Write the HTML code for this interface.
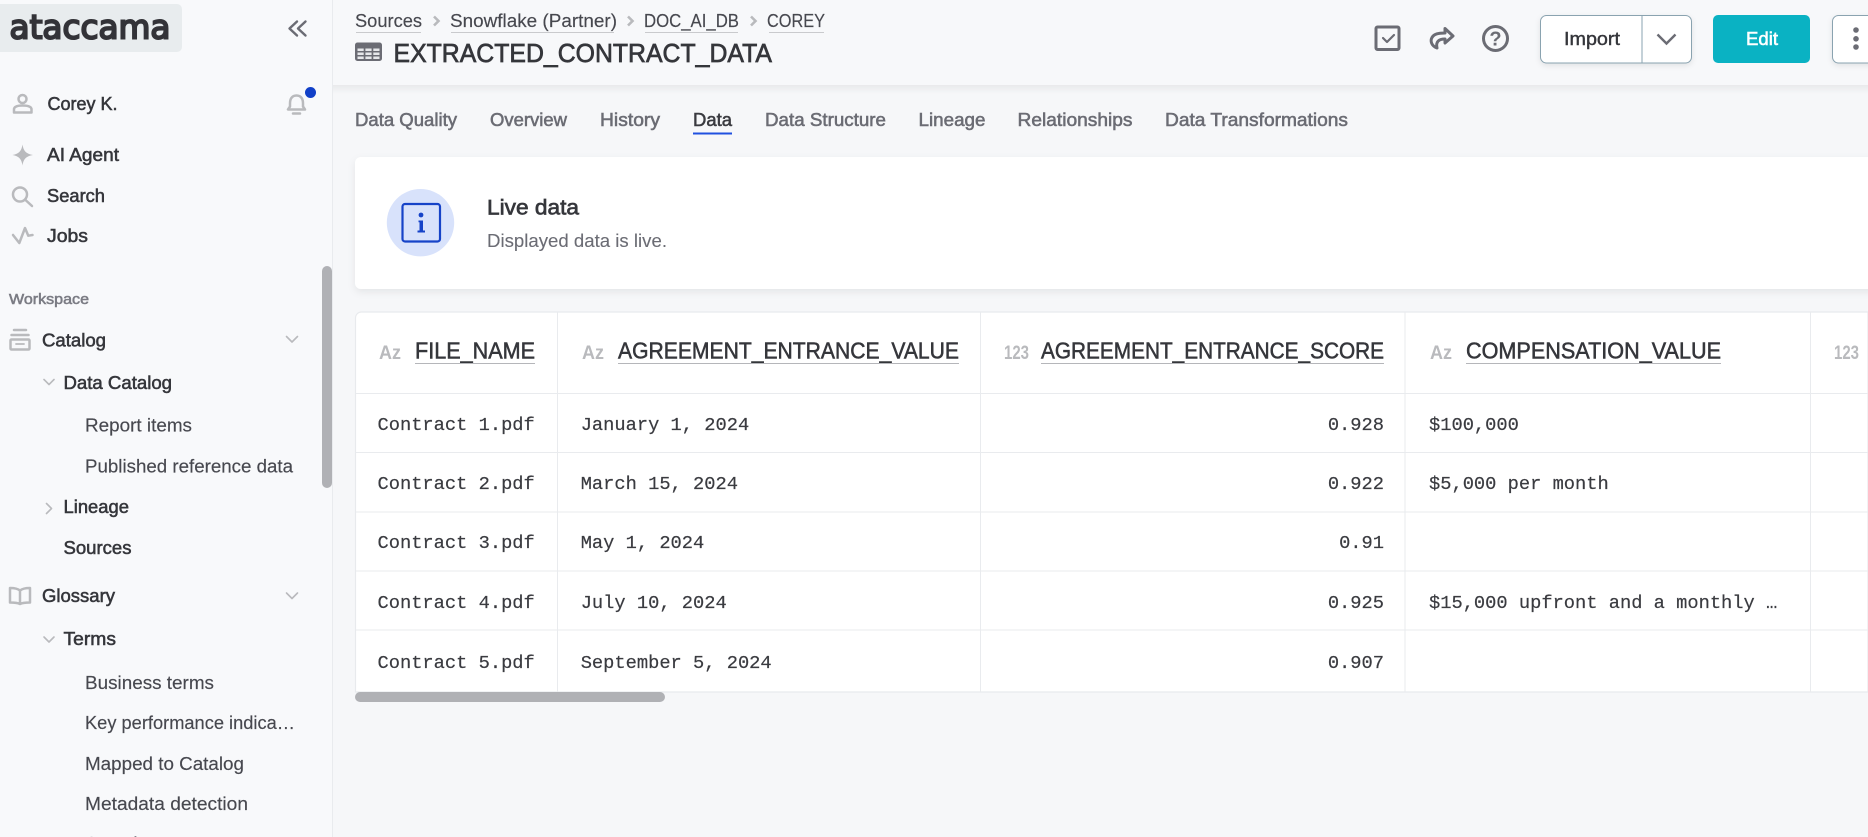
<!DOCTYPE html>
<html><head><meta charset="utf-8"><title>Extracted contract data</title>
<style>
html,body{margin:0;padding:0;background:#f6f7f9;overflow:hidden}
svg{display:block}
text{font-family:"Liberation Sans",Arial,sans-serif}
.m{stroke-width:.55px}
.n{fill:#35363b;stroke:#35363b;font-size:18.5px}
.r{fill:#47484f;stroke:#47484f;stroke-width:.15px;font-size:18.5px}
.tab{fill:#6b6c74;stroke:#6b6c74;font-size:18px}
.bc{fill:#47484f;stroke:#47484f;stroke-width:.15px;font-size:18px}
.h{fill:#35363b;stroke:#35363b;font-size:23px;stroke-width:.55px}
.az{fill:#b9babd;font-size:19px;font-weight:bold}
.c{font-family:"Liberation Mono",monospace;font-size:18.73px;fill:#3a3b40;stroke:#3a3b40;stroke-width:.2px}
.ic{fill:none;stroke:#b9babd;stroke-width:2.5;stroke-linecap:round;stroke-linejoin:round}
.ch{fill:none;stroke:#b9babd;stroke-width:1.6;stroke-linecap:round;stroke-linejoin:round}
.dk{fill:none;stroke:#6b6c74;stroke-width:3;stroke-linecap:round;stroke-linejoin:round}
.ln{stroke:#e9ebee;stroke-width:1}
.ul{stroke:#b5b6ba;stroke-width:1}
</style></head>
<body>
<svg width="1868" height="837" viewBox="0 0 1868 837" xmlns="http://www.w3.org/2000/svg">
<defs>
<linearGradient id="hs" x1="0" y1="0" x2="0" y2="1"><stop offset="0" stop-color="#000" stop-opacity=".055"/><stop offset="1" stop-color="#000" stop-opacity="0"/></linearGradient>
<filter id="sh" x="-5%" y="-20%" width="110%" height="150%"><feDropShadow dx="0" dy="3" stdDeviation="4" flood-color="#000" flood-opacity=".07"/></filter>
<filter id="sb" x="-20%" y="-30%" width="140%" height="170%"><feDropShadow dx="0" dy="2" stdDeviation="3" flood-color="#000" flood-opacity=".09"/></filter>
</defs>

<!-- backgrounds -->
<rect width="1868" height="837" fill="#f6f7f9"/>
<rect width="332" height="837" fill="#f8f9fb"/>
<rect x="332" width="1" height="837" fill="#e9ebee"/>
<rect x="333" y="85" width="1535" height="9" fill="url(#hs)"/>
<rect x="333" width="1535" height="85" fill="#f7f8fa"/>

<!-- logo -->
<rect x="-6" y="4" width="188" height="48" rx="5" fill="#e8ecee"/>
<text x="9.5" y="38.5" font-size="33" fill="#333338" stroke="#333338" stroke-width="2" style="font-family:'DejaVu Sans',sans-serif" textLength="161" lengthAdjust="spacingAndGlyphs">ataccama</text>
<path d="M297 21.5 L289.5 28.5 L297 35.5 M305.5 21.5 L298 28.5 L305.5 35.5" fill="none" stroke="#6b6c74" stroke-width="2.4" stroke-linecap="round" stroke-linejoin="round"/>

<!-- sidebar top -->
<circle cx="22.5" cy="99" r="4" class="ic"/>
<path d="M14 112.5 V109.5 C14 106.5 18 105.5 22.5 105.5 C27 105.5 31.5 106.5 31.5 109.5 V112.5 Z" class="ic"/>
<text x="47.5" y="110" class="n m" textLength="70" lengthAdjust="spacingAndGlyphs">Corey K.</text>
<path d="M296.5 95.5 C291.5 95.5 290 99.5 290 103.5 V106.5 L288 109.5 H305 L303 106.5 V103.5 C303 99.5 301.5 95.5 296.5 95.5 Z M293 113.5 H300" class="ic"/>
<circle cx="310.5" cy="92.5" r="5.5" fill="#1140c8"/>

<path d="M22.5 144.5 C23.5 151 26 153.7 33 155 C26 156.3 23.5 159 22.5 165.5 C21.5 159 19 156.3 12.5 155 C19 153.7 21.5 151 22.5 144.5 Z" fill="#b9babd"/>
<text x="47" y="161" class="n m" textLength="72" lengthAdjust="spacingAndGlyphs">AI Agent</text>
<circle cx="20" cy="194.5" r="7" class="ic"/>
<path d="M25.5 200 L32 206" class="ic"/>
<text x="47" y="202" class="n m" textLength="58" lengthAdjust="spacingAndGlyphs">Search</text>
<path d="M13 235 L19.3 243 L25 228 L28.3 235.7 L32.5 235" class="ic"/>
<text x="47" y="242" class="n m" textLength="41" lengthAdjust="spacingAndGlyphs">Jobs</text>

<text x="9" y="304" font-size="14.5" fill="#7b7c84" stroke="#7b7c84" class="m" textLength="80" lengthAdjust="spacingAndGlyphs">Workspace</text>

<!-- nav -->
<path d="M14 330 H26 M11.5 335 H28.5" class="ic"/>
<rect x="10.5" y="339.5" width="19" height="10" rx="1" class="ic"/>
<path d="M16 344 H24" class="ic" style="stroke-width:1.8"/>
<text x="42" y="346.5" class="n m" textLength="64" lengthAdjust="spacingAndGlyphs">Catalog</text>
<path d="M286.5 336.5 L292 342 L297.5 336.5" class="ch"/>
<path d="M44 379.5 L49 384.5 L54 379.5" class="ch"/>
<text x="63.5" y="389" class="n m" textLength="108.5" lengthAdjust="spacingAndGlyphs">Data Catalog</text>
<text x="85" y="431.5" class="r" textLength="107" lengthAdjust="spacingAndGlyphs">Report items</text>
<text x="85" y="472.5" class="r" textLength="208" lengthAdjust="spacingAndGlyphs">Published reference data</text>
<path d="M46.5 503.5 L51.5 508.5 L46.5 513.5" class="ch"/>
<text x="63.5" y="513" class="n m" textLength="65.5" lengthAdjust="spacingAndGlyphs">Lineage</text>
<text x="63.5" y="554" class="n m" textLength="68" lengthAdjust="spacingAndGlyphs">Sources</text>

<path d="M20 590.5 C17 588 13 588 10 588 V602.5 C13 602.5 17 602.5 20 604 C23 602.5 27 602.5 30 602.5 V588 C27 588 23 588 20 590.5 Z M20 590.5 V604" class="ic"/>
<text x="42" y="602" class="n m" textLength="73" lengthAdjust="spacingAndGlyphs">Glossary</text>
<path d="M286.5 593 L292 598.5 L297.5 593" class="ch"/>
<path d="M44 637 L49 642 L54 637" class="ch"/>
<text x="63.5" y="645" class="n m" textLength="52.5" lengthAdjust="spacingAndGlyphs">Terms</text>
<text x="85" y="689" class="r" textLength="129" lengthAdjust="spacingAndGlyphs">Business terms</text>
<text x="85" y="729" class="r" textLength="210" lengthAdjust="spacingAndGlyphs">Key performance indica…</text>
<text x="85" y="770" class="r" textLength="159" lengthAdjust="spacingAndGlyphs">Mapped to Catalog</text>
<text x="85" y="810" class="r" textLength="163" lengthAdjust="spacingAndGlyphs">Metadata detection</text>
<text x="85" y="850" class="r" textLength="72" lengthAdjust="spacingAndGlyphs">Samples</text>

<rect x="322" y="266" width="10" height="222" rx="5" fill="#b0b1b5"/>

<!-- breadcrumb -->
<text x="355" y="27" class="bc" textLength="67" lengthAdjust="spacingAndGlyphs">Sources</text>
<text x="450" y="27" class="bc" textLength="167" lengthAdjust="spacingAndGlyphs">Snowflake (Partner)</text>
<text x="644" y="27" class="bc" textLength="95" lengthAdjust="spacingAndGlyphs">DOC_AI_DB</text>
<text x="767" y="27" class="bc" textLength="58" lengthAdjust="spacingAndGlyphs">COREY</text>
<path d="M356 32.5 H421 M451 32.5 H614 M645 32.5 H738 M769 32.5 H824" stroke="#c9cacd" stroke-width="1"/>
<path d="M434 16.5 L438.5 21 L434 25.5 M628 16.5 L632.5 21 L628 25.5 M751 16.5 L755.5 21 L751 25.5" fill="none" stroke="#b9babd" stroke-width="2.6"/>

<!-- title -->
<rect x="355" y="42.5" width="27" height="18.5" rx="2.5" fill="#6b6c74"/>
<g fill="#e6e7ea">
<rect x="357.5" y="48.5" width="6.2" height="2.5"/><rect x="365.4" y="48.5" width="6.2" height="2.5"/><rect x="373.3" y="48.5" width="6.2" height="2.5"/>
<rect x="357.5" y="52.5" width="6.2" height="2.5"/><rect x="365.4" y="52.5" width="6.2" height="2.5"/><rect x="373.3" y="52.5" width="6.2" height="2.5"/>
<rect x="357.5" y="56.5" width="6.2" height="2.5"/><rect x="365.4" y="56.5" width="6.2" height="2.5"/><rect x="373.3" y="56.5" width="6.2" height="2.5"/>
</g>
<text x="393.5" y="62" font-size="25.5" fill="#35363b" stroke="#35363b" stroke-width=".7" textLength="378.5" lengthAdjust="spacingAndGlyphs">EXTRACTED_CONTRACT_DATA</text>

<!-- header actions -->
<rect x="1376" y="27" width="23" height="22.5" rx="1.5" class="dk"/>
<path d="M1383 38 L1387 42 L1394 35" class="dk" style="stroke-width:2.2"/>
<path d="M1445 28.5 L1453 36 L1445 43 V39 C1439 39 1435.5 41.5 1437 48 C1431.5 46 1430 41 1432 37.5 C1434 34 1438 33 1445 33 Z" class="dk"/>
<circle cx="1495.5" cy="38.5" r="12" class="dk"/>
<text x="1495.5" y="45.5" font-size="20" font-weight="bold" fill="#6b6c74" text-anchor="middle">?</text>

<rect x="1540.5" y="15.5" width="151" height="47.5" rx="6" fill="#fff" stroke="#8aa3b0" filter="url(#sb)"/>
<path d="M1642 16 V63" stroke="#8aa3b0"/>
<text x="1564" y="45" font-size="18.5" fill="#35363b" stroke="#35363b" stroke-width=".4" textLength="56" lengthAdjust="spacingAndGlyphs">Import</text>
<path d="M1657.5 34.5 L1666.5 43.5 L1675.5 34.5" fill="none" stroke="#6b6c74" stroke-width="2.4"/>
<rect x="1713" y="15" width="97" height="48" rx="5" fill="#0ab2c3"/>
<text x="1746" y="45" font-size="18.5" fill="#fff" stroke="#fff" class="m" textLength="32" lengthAdjust="spacingAndGlyphs">Edit</text>
<rect x="1832.5" y="15.5" width="60" height="47.5" rx="6" fill="#fff" stroke="#8aa3b0" filter="url(#sb)"/>
<circle cx="1856" cy="30" r="2.8" fill="#6b6c74"/><circle cx="1856" cy="38.8" r="2.8" fill="#6b6c74"/><circle cx="1856" cy="47" r="2.8" fill="#6b6c74"/>

<!-- tabs -->
<text x="355" y="126" class="tab m" textLength="102" lengthAdjust="spacingAndGlyphs">Data Quality</text>
<text x="490" y="126" class="tab m" textLength="77" lengthAdjust="spacingAndGlyphs">Overview</text>
<text x="600" y="126" class="tab m" textLength="60" lengthAdjust="spacingAndGlyphs">History</text>
<text x="693" y="126" class="tab m" style="fill:#3a3b40;stroke:#3a3b40" textLength="39" lengthAdjust="spacingAndGlyphs">Data</text>
<text x="765" y="126" class="tab m" textLength="121" lengthAdjust="spacingAndGlyphs">Data Structure</text>
<text x="918.5" y="126" class="tab m" textLength="67" lengthAdjust="spacingAndGlyphs">Lineage</text>
<text x="1017.5" y="126" class="tab m" textLength="115" lengthAdjust="spacingAndGlyphs">Relationships</text>
<text x="1165" y="126" class="tab m" textLength="183" lengthAdjust="spacingAndGlyphs">Data Transformations</text>
<rect x="693" y="132.5" width="39" height="2" fill="#2050e0"/>

<!-- info card -->
<rect x="355" y="157" width="1540" height="132" rx="6" fill="#fff" filter="url(#sh)"/>
<circle cx="420.5" cy="222.7" r="33.7" fill="#d8e2fb"/>
<rect x="402.5" y="204" width="37.5" height="37.5" rx="2.5" fill="none" stroke="#1643c8" stroke-width="2.2"/>
<circle cx="421" cy="215" r="2.4" fill="#1643c8"/>
<path d="M418.5 220.5 H423 V230.5 H425 V232.5 H417.5 V230.5 H419.5 V222.3 H418.5 Z" fill="#1643c8"/>
<text x="487" y="214.5" font-size="21" fill="#35363b" stroke="#35363b" stroke-width=".65" textLength="92" lengthAdjust="spacingAndGlyphs">Live data</text>
<text x="487" y="247" font-size="18" fill="#6b6c74" stroke="#6b6c74" stroke-width=".1" textLength="180" lengthAdjust="spacingAndGlyphs">Displayed data is live.</text>

<!-- table -->
<path d="M355.5 692 V318 a6 6 0 0 1 6 -6 H1868 V692 Z" fill="#fff" stroke="#e8eaed" stroke-width="1.2"/>
<path class="ln" d="M356 393.5 H1868 M356 452.5 H1868 M356 512 H1868 M356 571 H1868 M356 630 H1868 M557.5 312 V692 M980.5 312 V692 M1405 312 V692 M1810.5 312 V692"/>

<text x="379" y="359" class="az" textLength="22" lengthAdjust="spacingAndGlyphs">Az</text>
<text x="415" y="358.5" class="h" textLength="120" lengthAdjust="spacingAndGlyphs">FILE_NAME</text>
<text x="582" y="359" class="az" textLength="22" lengthAdjust="spacingAndGlyphs">Az</text>
<text x="618" y="358.5" class="h" textLength="341" lengthAdjust="spacingAndGlyphs">AGREEMENT_ENTRANCE_VALUE</text>
<text x="1004" y="359" class="az" textLength="25" lengthAdjust="spacingAndGlyphs">123</text>
<text x="1041" y="358.5" class="h" textLength="343" lengthAdjust="spacingAndGlyphs">AGREEMENT_ENTRANCE_SCORE</text>
<text x="1430" y="359" class="az" textLength="22" lengthAdjust="spacingAndGlyphs">Az</text>
<text x="1466" y="358.5" class="h" textLength="255" lengthAdjust="spacingAndGlyphs">COMPENSATION_VALUE</text>
<text x="1834" y="359" class="az" textLength="25" lengthAdjust="spacingAndGlyphs">123</text>
<path class="ul" d="M415 363.5 H535 M618 363.5 H959 M1041 363.5 H1384 M1466 363.5 H1721"/>

<text x="377.5" y="430" class="c">Contract 1.pdf</text>
<text x="580.7" y="430" class="c">January 1, 2024</text>
<text x="1384" y="430" class="c" text-anchor="end">0.928</text>
<text x="1429" y="430" class="c">$100,000</text>

<text x="377.5" y="489" class="c">Contract 2.pdf</text>
<text x="580.7" y="489" class="c">March 15, 2024</text>
<text x="1384" y="489" class="c" text-anchor="end">0.922</text>
<text x="1429" y="489" class="c">$5,000 per month</text>

<text x="377.5" y="548" class="c">Contract 3.pdf</text>
<text x="580.7" y="548" class="c">May 1, 2024</text>
<text x="1384" y="548" class="c" text-anchor="end">0.91</text>

<text x="377.5" y="608" class="c">Contract 4.pdf</text>
<text x="580.7" y="608" class="c">July 10, 2024</text>
<text x="1384" y="608" class="c" text-anchor="end">0.925</text>
<text x="1429" y="608" class="c">$15,000 upfront and a monthly …</text>

<text x="377.5" y="668" class="c">Contract 5.pdf</text>
<text x="580.7" y="668" class="c">September 5, 2024</text>
<text x="1384" y="668" class="c" text-anchor="end">0.907</text>

<rect x="355" y="692" width="310" height="10" rx="5" fill="#b0b1b5"/>
</svg>
</body></html>
